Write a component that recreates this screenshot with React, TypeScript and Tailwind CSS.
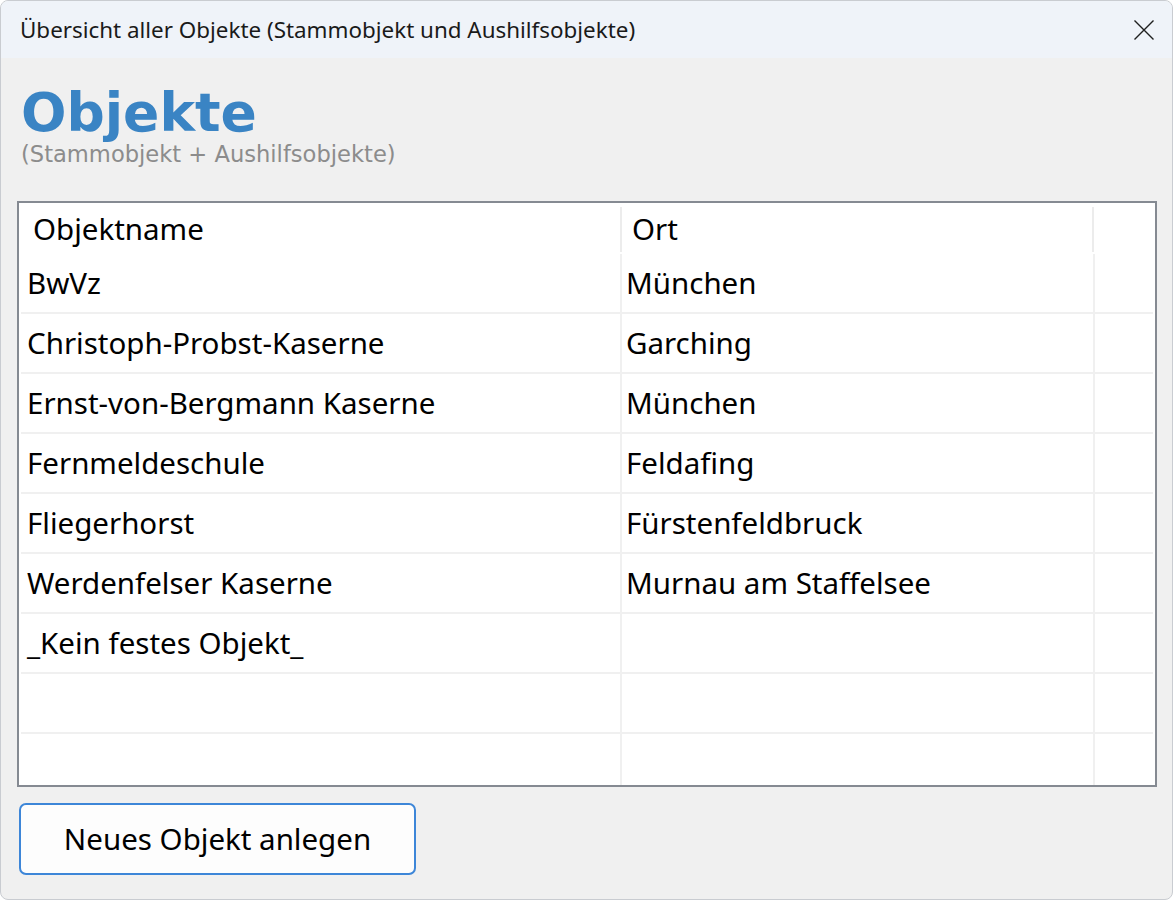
import React from "react";

const rows: [string, string][] = [
  ["BwVz", "München"],
  ["Christoph-Probst-Kaserne", "Garching"],
  ["Ernst-von-Bergmann Kaserne", "München"],
  ["Fernmeldeschule", "Feldafing"],
  ["Fliegerhorst", "Fürstenfeldbruck"],
  ["Werdenfelser Kaserne", "Murnau am Staffelsee"],
  ["_Kein festes Objekt_", ""],
  ["", ""],
  ["", ""],
];

export default function App() {
  return (
    <div className="w-[1176px] h-[902px] bg-white overflow-hidden">
      <div
        className="w-[1173px] h-[900px] rounded-lg border border-[#c9ccd1] bg-[#f0f0f0] flex flex-col overflow-hidden text-black"
        style={{ fontFamily: '"Noto Sans", "Open Sans", sans-serif' }}
      >
        {/* title bar */}
        <div className="h-[57px] shrink-0 bg-[#eff3f9] flex items-center justify-between pl-[19px] pr-[17px]">
          <span className="text-[22.4px] text-[#1a1a1a]">
            Übersicht aller Objekte (Stammobjekt und Aushilfsobjekte)
          </span>
          <svg width="22" height="22" viewBox="0 0 22 22">
            <path d="M1.5 1.5 L20.5 20.5 M20.5 1.5 L1.5 20.5" stroke="#1f1f1f" strokeWidth="1.4" />
          </svg>
        </div>

        {/* heading */}
        <div
          className="h-[143px] shrink-0 pl-[20px] pt-[27px]"
          style={{ fontFamily: '"DejaVu Sans", Verdana, sans-serif' }}
        >
          <div className="text-[53.5px] font-bold leading-[55px] text-[#3a84c4]">Objekte</div>
          <div className="text-[22.6px] leading-[24px] text-[#8c8c8c] mt-[2px]">(Stammobjekt + Aushilfsobjekte)</div>
        </div>

        {/* table */}
        <div className="ml-[16px] w-[1140px] h-[586px] shrink-0 border-2 border-[#858a92] bg-white flex flex-col overflow-hidden">
          <div className="h-[51px] shrink-0 flex text-[29.5px] items-stretch pt-[2px]">
            <div className="w-[601px] pl-[14px] flex items-center">Objektname</div>
            <div className="w-[2px] bg-[#ececec] my-[2px]" />
            <div className="w-[470px] pl-[10px] flex items-center">Ort</div>
            <div className="w-[2px] bg-[#ececec] my-[2px]" />
            <div className="flex-1" />
          </div>
          {rows.map((r, i) => (
            <div key={i} className="h-[60px] shrink-0 flex text-[29.5px] border-b-2 border-[#f0f0f0] mx-[2px]">
              <div className="w-[599px] pl-[6px] flex items-center">{r[0]}</div>
              <div className="w-[2px] bg-[#f0f0f0]" />
              <div className="w-[471px] pl-[4px] flex items-center">{r[1]}</div>
              <div className="w-[2px] bg-[#f0f0f0]" />
              <div className="flex-1" />
            </div>
          ))}
        </div>

        {/* button */}
        <div className="ml-[18px] mt-[16px]">
          <button className="w-[397px] h-[72px] rounded-[7px] border-2 border-[#3d86d8] bg-[#fdfdfd] text-[29.5px] text-black">
            Neues Objekt anlegen
          </button>
        </div>
      </div>
    </div>
  );
}
